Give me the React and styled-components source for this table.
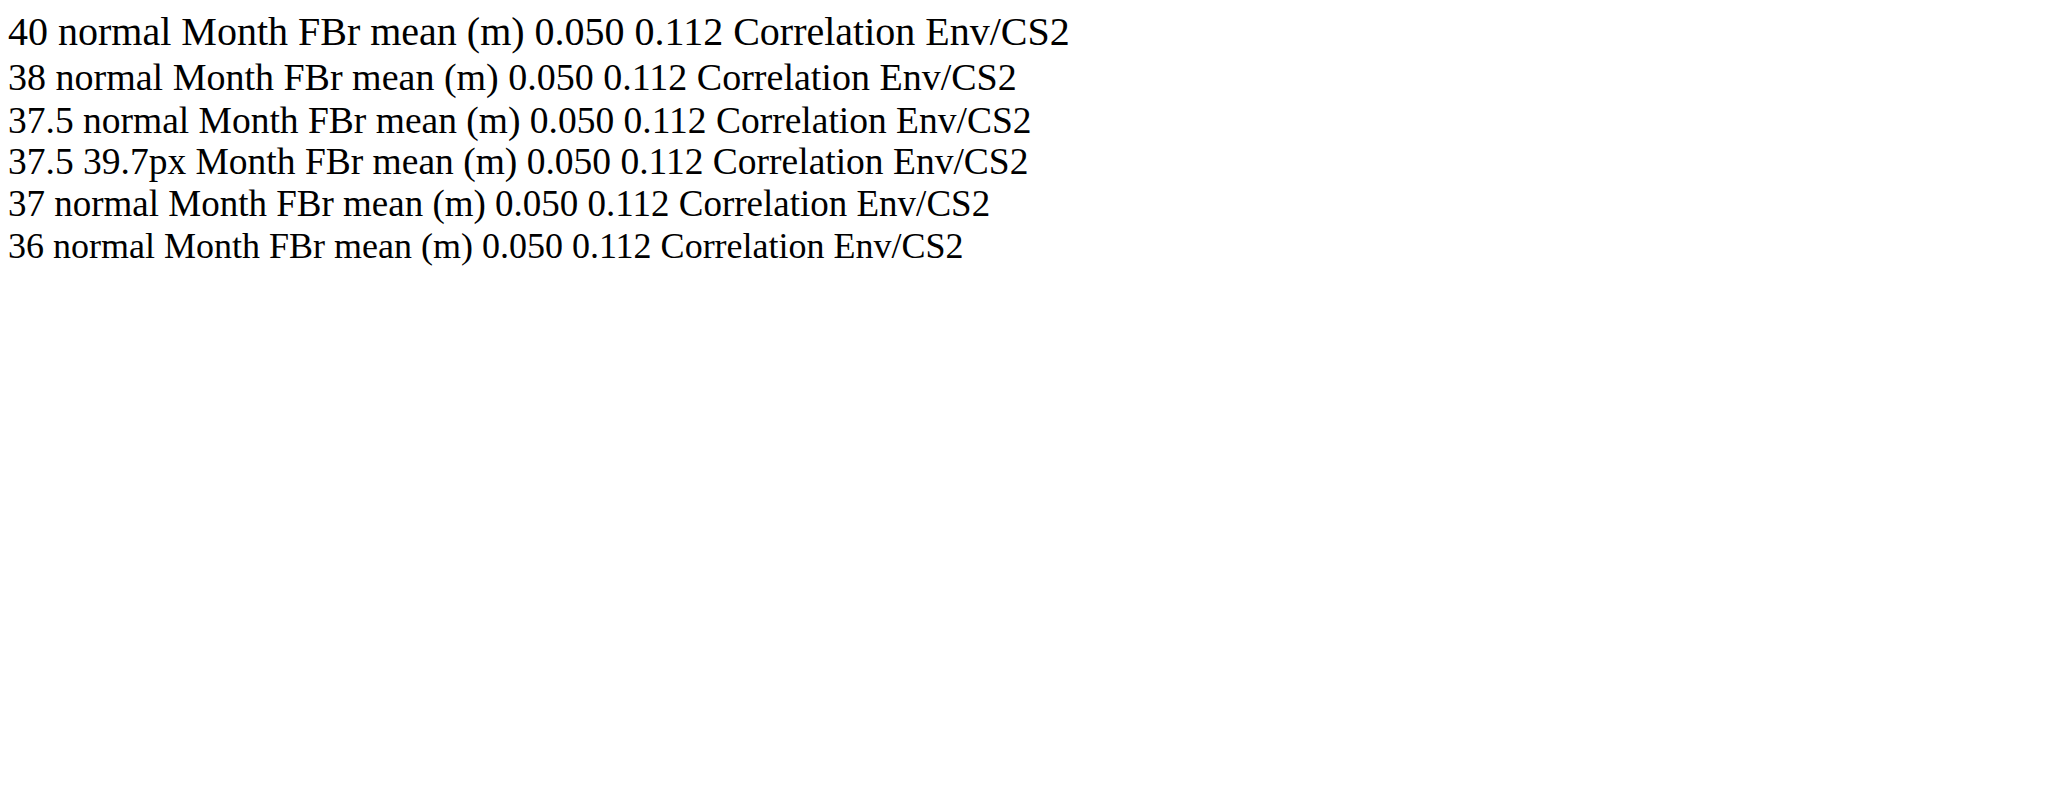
import React from "react";
import styled from "styled-components";

const StyledLine = styled.div`
  font-family: "Liberation Serif", serif;
  font-size: ${(props) => props.$size}px;
  line-height: ${(props) => props.$lh};
`;

const sizes = [
  [40, "normal"],
  [38, "normal"],
  [37.5, "normal"],
  [37.5, "39.7px"],
  [37, "normal"],
  [36, "normal"],
];

const App = () => {
  return (
    <div>
      {sizes.map(([size, lh]) => (
        <StyledLine key={size + lh} $size={size} $lh={lh}>
          {size} {lh} Month FBr mean (m) 0.050 0.112 Correlation Env/CS2
        </StyledLine>
      ))}
    </div>
  );
};

export default App;
